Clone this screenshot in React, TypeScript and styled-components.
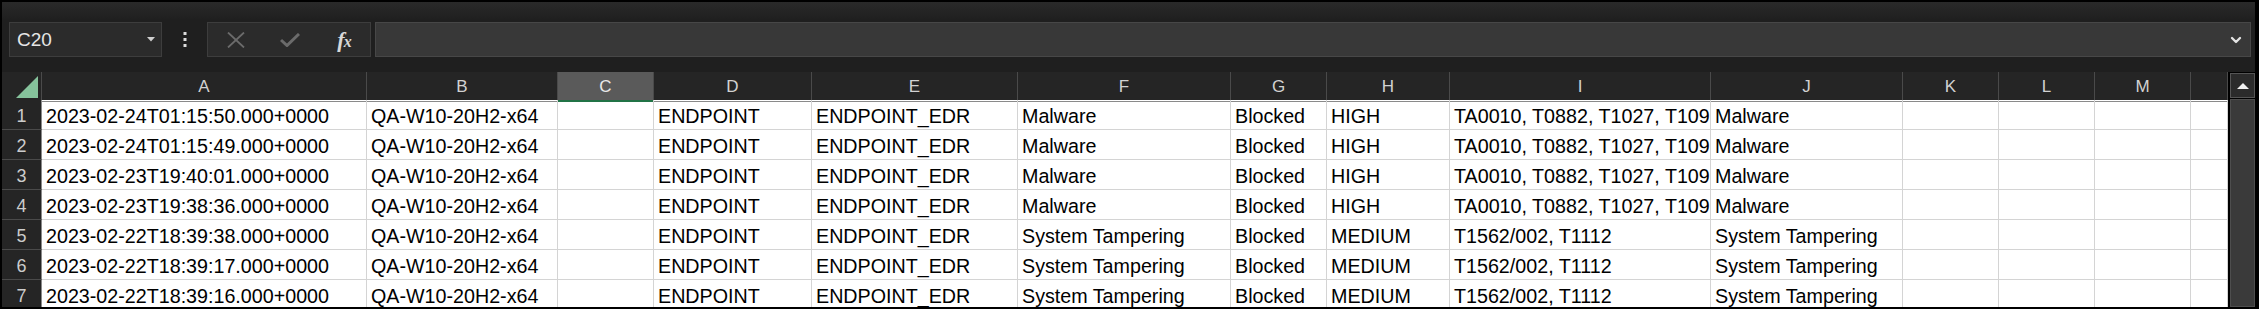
import styled, { createGlobalStyle } from 'styled-components';
import { ChevronDown } from 'lucide-react';

type Row = string[];

const COLS = '40px 325px 191px 96px 158px 206px 213px 96px 123px 261px 192px 96px 96px 96px 1fr';
const LETTERS = ['A', 'B', 'C', 'D', 'E', 'F', 'G', 'H', 'I', 'J', 'K', 'L', 'M', ''];
const SELECTED_COL = 'C';

const malware = (ts: string): Row => [
  ts, 'QA-W10-20H2-x64', '', 'ENDPOINT', 'ENDPOINT_EDR', 'Malware', 'Blocked', 'HIGH',
  'TA0010, T0882, T1027, T1091, T1112', 'Malware', '', '', '', '',
];

const tampering = (ts: string): Row => [
  ts, 'QA-W10-20H2-x64', '', 'ENDPOINT', 'ENDPOINT_EDR', 'System Tampering', 'Blocked', 'MEDIUM',
  'T1562/002, T1112', 'System Tampering', '', '', '', '',
];

const rows: Row[] = [
  malware('2023-02-24T01:15:50.000+0000'),
  malware('2023-02-24T01:15:49.000+0000'),
  malware('2023-02-23T19:40:01.000+0000'),
  malware('2023-02-23T19:38:36.000+0000'),
  tampering('2023-02-22T18:39:38.000+0000'),
  tampering('2023-02-22T18:39:17.000+0000'),
  tampering('2023-02-22T18:39:16.000+0000'),
];

/* ── styles ── */

const GlobalStyle = createGlobalStyle`
  html, body {
    margin: 0;
    padding: 0;
    background: #000;
    overflow: hidden;
  }
  * { box-sizing: border-box; }
`;

const Frame = styled.div`
  width: 2259px;
  height: 309px;
  background: #000;
  padding: 2px 4px 2px 2px;
  display: flex;
  flex-direction: column;
  overflow: hidden;
  font-family: 'Liberation Sans', Arial, sans-serif;
`;

const Toolbar = styled.div`
  height: 70px;
  flex-shrink: 0;
  background: linear-gradient(#2a2a2a, #1f1f1f 18px);
  display: flex;
  align-items: flex-start;
  padding: 20px 4px 0 7px;
`;

const NameBox = styled.div`
  width: 153px;
  height: 35px;
  background: #2b2b2b;
  border: 1px solid #3d3d3d;
  display: flex;
  align-items: center;
  justify-content: space-between;
  padding: 0 6px 0 7px;
  color: #e6e6e6;
  font-size: 19px;
`;

const Dots = styled.div`
  width: 45px;
  height: 35px;
  display: flex;
  align-items: center;
  justify-content: center;
`;

const FxGroup = styled.div`
  width: 164px;
  height: 35px;
  background: #2b2b2b;
  border: 1px solid #3d3d3d;
  display: grid;
  grid-template-columns: 54px 54px 54px;
  align-items: center;
  justify-items: center;
  padding-left: 1px;
`;

const FxLabel = styled.span`
  font-family: 'Liberation Serif', 'DejaVu Serif', serif;
  font-style: italic;
  font-weight: 700;
  color: #d8d8d8;
  font-size: 22px;
  letter-spacing: -1px;

  small {
    font-size: 16px;
  }
`;

const FormulaInput = styled.div`
  flex: 1;
  margin-left: 4px;
  height: 35px;
  background: #383838;
  border: 1px solid #474747;
  display: flex;
  align-items: center;
  justify-content: flex-end;
  padding-right: 6px;
  color: #e4e4e4;
`;

const SheetArea = styled.div`
  flex: 1;
  min-height: 0;
  display: flex;
  gap: 2px;
  background: #000;
`;

const Grid = styled.div`
  width: 2226px;
  overflow: hidden;
`;

const GridRow = styled.div<{ $header?: boolean }>`
  display: grid;
  grid-template-columns: ${COLS};
  height: ${({ $header }) => ($header ? '28px' : '30px')};
  background: ${({ $header }) => ($header ? '#252525' : '#fff')};
`;

const Corner = styled.div`
  border-bottom: 1px solid #8a8a8a;
  border-right: 1px solid #4a4a4a;
  display: flex;
  align-items: flex-end;
  justify-content: flex-end;
  padding: 0 3px 3px 0;
`;

const ColHeader = styled.div<{ $selected: boolean }>`
  background: ${({ $selected }) => ($selected ? '#5a5a5a' : 'transparent')};
  border-right: 1px solid #4a4a4a;
  border-bottom: ${({ $selected }) => ($selected ? '2px solid #217346' : '1px solid #8a8a8a')};
  color: ${({ $selected }) => ($selected ? '#e8e8e8' : '#d2d2d2')};
  font-size: 17px;
  text-align: center;
  line-height: 26px;
  padding-top: 2px;
`;

const RowHeader = styled.div`
  background: #252525;
  border-right: 1px solid #8a8a8a;
  border-bottom: 1px solid #4a4a4a;
  color: #cccccc;
  font-size: 18px;
  text-align: center;
  line-height: 26px;
  padding-top: 3px;
`;

const Cell = styled.div`
  border-right: 1px solid #d4d4d4;
  border-bottom: 1px solid #d4d4d4;
  color: #000;
  font-size: 19.7px;
  line-height: 26px;
  padding: 3px 0 0 4px;
  white-space: nowrap;
  overflow: hidden;
`;

const VScroll = styled.div`
  width: 25px;
  display: flex;
  flex-direction: column;
  gap: 1px;
  padding-top: 1px;
`;

const ScrollButton = styled.div`
  height: 25px;
  background: #2b2b2b;
  border: 1px solid #555;
  display: flex;
  align-items: center;
  justify-content: center;
`;

const ScrollThumb = styled.div`
  flex: 1;
  background: #3a3a3a;
  border: 1px solid #4e4e4e;
`;

/* ── component ── */

function App() {
  return (
    <>
      <GlobalStyle />
      <Frame>
        <Toolbar>
          <NameBox>
            <span>C20</span>
            <svg width="8" height="5" viewBox="0 0 8 5">
              <path d="M0 0 H8 L4 4.5 Z" fill="#cfcfcf" />
            </svg>
          </NameBox>
          <Dots>
            <svg width="4" height="15" viewBox="0 0 4 15">
              <rect x="0.5" y="0" width="3" height="3" fill="#dcdcdc" />
              <rect x="0.5" y="6" width="3" height="3" fill="#dcdcdc" />
              <rect x="0.5" y="12" width="3" height="3" fill="#dcdcdc" />
            </svg>
          </Dots>
          <FxGroup>
            <svg width="18" height="16" viewBox="0 0 18 16">
              <path d="M1 0.5 L17 15.5 M17 0.5 L1 15.5" stroke="#6b6b6b" strokeWidth="1.8" />
            </svg>
            <svg width="20" height="14" viewBox="0 0 20 14">
              <path d="M1 7 L7 12.5 L19 1" stroke="#6b6b6b" strokeWidth="3" fill="none" />
            </svg>
            <FxLabel>
              f<small>x</small>
            </FxLabel>
          </FxGroup>
          <FormulaInput>
            <ChevronDown size={16} strokeWidth={3.5} />
          </FormulaInput>
        </Toolbar>

        <SheetArea>
          <Grid>
            <GridRow $header>
              <Corner>
                <svg width="22" height="22" viewBox="0 0 22 22">
                  <path d="M22 0 V22 H0 Z" fill="#86c39c" />
                </svg>
              </Corner>
              {LETTERS.map((l, i) => (
                <ColHeader key={i} $selected={l === SELECTED_COL}>
                  {l}
                </ColHeader>
              ))}
            </GridRow>
            {rows.map((row, r) => (
              <GridRow key={r}>
                <RowHeader>{r + 1}</RowHeader>
                {row.map((val, c) => (
                  <Cell key={c}>{val}</Cell>
                ))}
              </GridRow>
            ))}
          </Grid>
          <VScroll>
            <ScrollButton>
              <svg width="12" height="6" viewBox="0 0 12 6">
                <path d="M0 6 L6 0 L12 6 Z" fill="#f0f0f0" />
              </svg>
            </ScrollButton>
            <ScrollThumb />
          </VScroll>
        </SheetArea>
      </Frame>
    </>
  );
}

export default App;
